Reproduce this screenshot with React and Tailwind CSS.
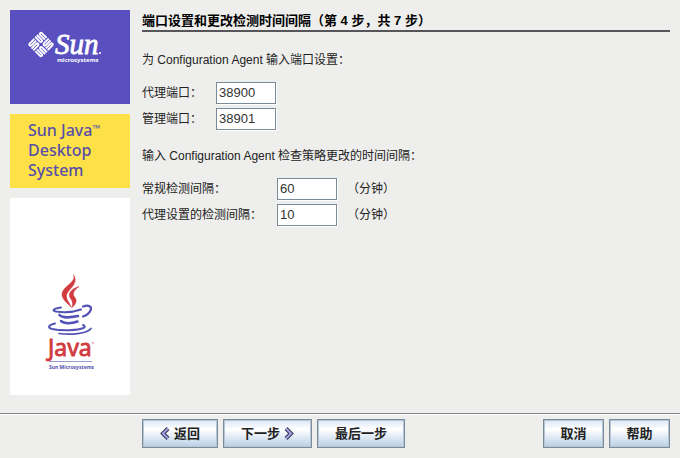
import React, { useState } from 'react'

const PORTS = [
  { id: 'agent-port', label: '代理端口：', value: '38900' },
  { id: 'admin-port', label: '管理端口：', value: '38901' },
]

const INTERVALS = [
  { id: 'general-interval', label: '常规检测间隔：', value: '60', unit: '（分钟）' },
  { id: 'agent-interval', label: '代理设置的检测间隔：', value: '10', unit: '（分钟）' },
]

function SunLogo() {
  return (
    <svg viewBox="0 0 120 94" className="block w-full" role="img" aria-label="Sun Microsystems">
      <g transform="translate(31 34.5) rotate(45)" fill="none" stroke="#fff" strokeWidth="1.9">
        {[0, 90, 180, 270].map(a => (
          <g key={a} transform={`rotate(${a})`}>
            <path d="M1.3 -9.6V-2.8a1.2 1.2 0 0 0 2.5 0V-9.6" />
            <path d="M6.2 -.7V-7.4a1.2 1.2 0 0 1 2.5 0V-.7" />
          </g>
        ))}
      </g>
      <text x="45" y="44" fill="#fff" stroke="#fff" strokeWidth=".8" fontSize="29" className="font-['Liberation_Serif',serif] italic">Sun</text>
      <circle cx="90" cy="43" r="1" fill="#fff" />
      <text x="47" y="52" fill="#fff" fontSize="6" className="font-['Noto_Sans',sans-serif] font-bold">microsystems</text>
    </svg>
  )
}

function JavaLogo() {
  return (
    <svg viewBox="0 0 120 197" className="block w-full" role="img" aria-label="Java, Sun Microsystems">
      {/* Steam */}
      <g fill="#d13a3e" stroke="#d13a3e" strokeWidth=".5">
        <path d="M63.5 77C67 84 52 88.5 52 96.5C52 101.5 58 105.5 61.5 109.5C59.5 104.5 56 101.5 56.5 97.5C57.3 91.5 69.5 86 63.5 77Z" />
        <path d="M69 88.5C62.5 90.5 58.5 94.5 59.5 98.5C60.5 101.5 64 103 62 109.5C67 105.5 67 101.5 64.5 99C62 96 63.5 92.5 69 88.5Z" />
      </g>
      {/* Cup and saucer */}
      <g fill="none" stroke="#5353b5" strokeLinecap="round">
        <path d="M51 109.5C44 110.5 41 112.5 46 113.5C53 114.5 64 114 71 111.5" strokeWidth="2" />
        <path d="M73 108.5C78.5 106.5 82.5 108.5 80.5 112.5C79 115.5 76 117.5 73 118.5" strokeWidth="2.2" />
        <path d="M49.5 117C52 120 61 119.5 68 118" strokeWidth="2.6" />
        <path d="M51 123C54 126 62 125.5 67.5 123.5" strokeWidth="2.5" />
        <path d="M45 125.5C38.5 127 37 129.5 42 131C52 133 68 132.5 73.5 130C75.5 129 75 128 73 127" strokeWidth="2" />
        <path d="M49 135.5C60 137 77 136 81 130.5" strokeWidth="1.7" />
      </g>
      <text x="38" y="158" fill="#d13a3e" stroke="#d13a3e" strokeWidth=".8" fontSize="23" className="font-['Noto_Sans',sans-serif]">Java</text>
      <circle cx="83" cy="145" r="0.7" fill="#d13a3e" />
      <path d="M39 163.5H82" stroke="#9a9ad0" />
      <text x="39" y="171" fill="#5353ad" fontSize="5" className="font-['Noto_Sans',sans-serif] font-bold">Sun Microsystems</text>
    </svg>
  )
}

function Chevron({ left }) {
  return (
    <svg width="10" height="13" viewBox="0 0 10 13" aria-hidden="true">
      <g transform={left ? 'matrix(-1 0 0 1 10 0)' : undefined} fill="none">
        <path d="M2 1.5L7 6.5L2 11.5" stroke="#35354a" strokeWidth="4" />
        <path d="M2 1.5L7 6.5L2 11.5" stroke="#a3a1ec" strokeWidth="2" />
      </g>
    </svg>
  )
}

function NavButton({ className, children }) {
  return (
    <button
      type="button"
      className={`flex h-[29px] items-center justify-center gap-1 border border-[#7a8a99] bg-linear-to-b from-[#dce8f4] via-white via-35% to-[#b8cfe5] text-[13px] font-bold text-[#222] shadow-[inset_0_0_0_1px_#b4c6d8] ${className}`}
    >
      {children}
    </button>
  )
}

function Field({ id, value, onChange }) {
  return (
    <input
      id={id}
      type="text"
      value={value}
      onChange={e => onChange(id, e.target.value)}
      className="h-[22px] w-[60px] border border-[#7a8a99] bg-white px-0.5 pb-0.5 text-[13px] text-[#333] shadow-[1px_1px_0_#fff] outline-none"
    />
  )
}

export default function App() {
  const [values, setValues] = useState(
    Object.fromEntries([...PORTS, ...INTERVALS].map(f => [f.id, f.value]))
  )
  const update = (id, value) => setValues(v => ({ ...v, [id]: value }))

  return (
    <div className="flex min-h-screen flex-col bg-[#eeeeec] font-['Liberation_Sans','Noto_Sans_CJK_SC',sans-serif] text-xs text-[#222]">
      <div className="flex flex-1 gap-3 px-2.5 pt-2.5 pb-[18px]">
        {/* Branding */}
        <aside className="flex w-[120px] shrink-0 flex-col gap-2.5">
          <div className="bg-[#594fbf]">
            <SunLogo />
          </div>
          <div className="bg-[#fde147] py-1.5 pl-[18px] pb-2 font-['Noto_Sans',sans-serif] text-base leading-5 font-medium text-[#594fa8]">
            <div className="flex">Sun Java<span className="text-[10px] leading-4">™</span></div>
            <div>Desktop</div>
            <div>System</div>
          </div>
          <div className="flex-1 bg-white">
            <JavaLogo />
          </div>
        </aside>

        {/* Form */}
        <main className="min-w-0 flex-1">
          <h1 className="border-b-2 border-[#55555a] pt-0.5 text-[13px] leading-[18px] font-bold text-black">
            端口设置和更改检测时间间隔（第 4 步，共 7 步）
          </h1>

          <p className="mt-[18px] leading-5">为 Configuration Agent 输入端口设置：</p>
          <div className="mt-3 flex flex-col gap-1">
            {PORTS.map(f => (
              <div key={f.id} className="flex items-center">
                <label htmlFor={f.id} className="w-[74px]">{f.label}</label>
                <Field id={f.id} value={values[f.id]} onChange={update} />
              </div>
            ))}
          </div>

          <p className="mt-4 leading-5">输入 Configuration Agent 检查策略更改的时间间隔：</p>
          <div className="mt-3 flex flex-col gap-1">
            {INTERVALS.map(f => (
              <div key={f.id} className="flex items-center">
                <label htmlFor={f.id} className="w-[135px]">{f.label}</label>
                <Field id={f.id} value={values[f.id]} onChange={update} />
                <span className="ml-2.5">{f.unit}</span>
              </div>
            ))}
          </div>
        </main>
      </div>

      <footer className="flex items-center gap-[5px] border-t border-[#808080] pt-[5px] pr-2.5 pb-2.5 pl-[142px] shadow-[inset_0_1px_0_#fff]">
        <NavButton className="w-[76px]"><Chevron left />返回</NavButton>
        <NavButton className="w-[89px]">下一步<Chevron /></NavButton>
        <NavButton className="w-[88px]">最后一步</NavButton>
        <NavButton className="ml-auto w-[61px]">取消</NavButton>
        <NavButton className="w-[61px]">帮助</NavButton>
      </footer>
    </div>
  )
}
